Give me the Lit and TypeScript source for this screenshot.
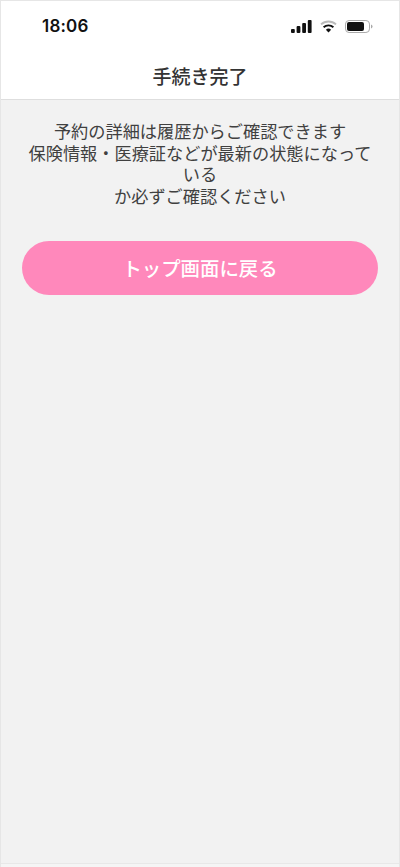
import { LitElement, html, css } from "lit";
import { customElement } from "lit/decorators.js";

@customElement("app-root")
export class AppRoot extends LitElement {
  static styles = css`
    :host {
      display: block;
      width: 400px;
      height: 867px;
      box-sizing: border-box;
      font-family: "Noto Sans CJK JP", "Inter", sans-serif;
      background: #f5f5f5;
      border: 1px solid #e6e6e6;
      border-bottom: none;
      color: #333;
    }
    .page {
      box-sizing: border-box;
      display: flex;
      flex-direction: column;
      height: 863px;
      background: #f2f2f2;
      border-bottom: 1px solid #e8e8e8;
    }
    .head {
      background: #fff;
      border-bottom: 1px solid #dedede;
      height: 98px;
      flex: none;
      display: flex;
      flex-direction: column;
    }
    .status {
      box-sizing: border-box;
      height: 50px;
      display: flex;
      align-items: center;
      justify-content: space-between;
      padding: 0 26px 0 41px;
      flex: none;
    }
    .time {
      font-family: "Inter", sans-serif;
      font-weight: 600;
      font-size: 17px;
      letter-spacing: 0.2px;
      color: #111;
    }
    .icons { display: flex; align-items: center; gap: 8px; }
    .title {
      margin-top: 3px;
      text-align: center;
      font-size: 19px;
      font-weight: 500;
      line-height: 44px;
      color: #333;
    }
    .body {
      padding: 20px 21px 0;
      display: flex;
      flex-direction: column;
      align-items: center;
    }
    .msg {
      text-align: center;
      font-size: 17.2px;
      line-height: 21.5px;
      width: 100%;
      color: #404040;
    }
    .btn {
      margin-top: 34.6px;
      width: 100%;
      height: 54px;
      border: none;
      border-radius: 27px;
      background: #ff88bb;
      color: #fff;
      font: inherit;
      font-size: 19.4px;
      font-weight: 500;
      display: flex;
      align-items: center;
      justify-content: center;
      padding: 0;
    }
  `;

  render() {
    return html`
      <div class="page">
        <div class="head">
          <div class="status">
            <span class="time">18:06</span>
            <span class="icons">
              <svg width="21" height="13" viewBox="0 0 21 13" fill="#111">
                <rect x="0" y="9" width="3.8" height="4" rx="1"/>
                <rect x="5.6" y="6" width="3.8" height="7" rx="1"/>
                <rect x="11.2" y="3" width="3.8" height="10" rx="1"/>
                <rect x="16.8" y="0" width="3.8" height="13" rx="1"/>
              </svg>
              <svg width="17" height="13" viewBox="0 0 17 13">
                <path d="M1 4.4 A11 11 0 0 1 16 4.4" fill="none" stroke="#bbb" stroke-width="1.9"/>
                <path d="M3.6 7.2 A7.4 7.4 0 0 1 13.4 7.2" fill="none" stroke="#111" stroke-width="1.9"/>
                <path d="M5.9 9.8 A3.8 3.8 0 0 1 11.1 9.8 L8.5 12.6 Z" fill="#111"/>
              </svg>
              <svg width="28" height="13" viewBox="0 0 28 13">
                <rect x="0.5" y="0.5" width="24" height="12" rx="3.6" fill="#fff" stroke="#aaa"/>
                <rect x="2" y="2" width="17" height="9" rx="2" fill="#111"/>
                <path d="M26 4.4 A2.2 2.2 0 0 1 26 8.6 Z" fill="#aaa"/>
              </svg>
            </span>
          </div>
          <div class="title">手続き完了</div>
        </div>
        <div class="body">
          <div class="msg">予約の詳細は履歴からご確認できます<br />保険情報・医療証などが最新の状態になっている<br />か必ずご確認ください</div>
          <button class="btn">トップ画面に戻る</button>
        </div>
      </div>
    `;
  }
}
